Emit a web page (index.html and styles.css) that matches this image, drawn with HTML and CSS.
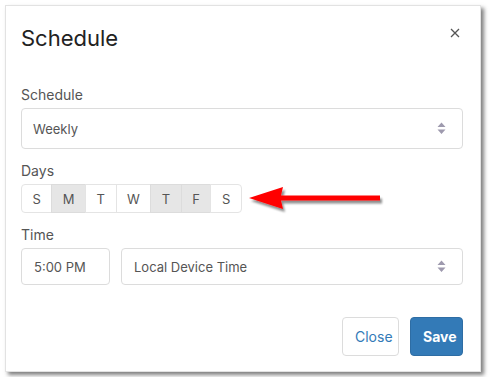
FILE: index.html
```html
<!DOCTYPE html>
<html>
<head>
<meta charset="utf-8">
<link rel="stylesheet" href="styles.css">
</head>
<body>
<div class="modal">
  <div class="modal-header">
    <h4 class="modal-title">Schedule</h4>
    <button class="close" aria-label="Close">
      <svg width="10" height="10" viewBox="0 0 10 10"><path d="M1 1L9 9M9 1L1 9" stroke="#555" stroke-width="1.3" fill="none"/></svg>
    </button>
  </div>
  <div class="modal-body">
    <div class="group">
      <label class="label">Schedule</label>
      <div class="select tall"><span>Weekly</span><span class="caret"><svg width="9" height="13" viewBox="0 0 9 13"><path d="M4.5 0.5L8.5 5H0.5Z M0.5 7.5H8.5L4.5 12Z" fill="#9e9aae"/></svg></span></div>
    </div>
    <div class="group">
      <label class="label">Days</label>
      <div class="days">
        <span class="day">S</span>
        <span class="day on">M</span>
        <span class="day">T</span>
        <span class="day">W</span>
        <span class="day on">T</span>
        <span class="day on">F</span>
        <span class="day">S</span>
      </div>
    </div>
    <div class="group">
      <label class="label">Time</label>
      <div class="time-row">
        <div class="input time">5:00 PM</div>
        <div class="select zone"><span>Local Device Time</span><span class="caret"><svg width="9" height="13" viewBox="0 0 9 13"><path d="M4.5 0.5L8.5 5H0.5Z M0.5 7.5H8.5L4.5 12Z" fill="#9e9aae"/></svg></span></div>
      </div>
    </div>
  </div>
  <div class="modal-footer">
    <button class="btn btn-default">Close</button>
    <button class="btn btn-primary">Save</button>
  </div>
</div>
<svg class="arrow" width="150" height="36" viewBox="0 0 150 36">
  <defs>
    <filter id="sh" x="-10%" y="-30%" width="130%" height="170%">
      <feGaussianBlur in="SourceAlpha" stdDeviation="1.2"/>
      <feOffset dx="2" dy="3" result="b"/>
      <feComponentTransfer><feFuncA type="linear" slope="0.45"/></feComponentTransfer>
      <feMerge><feMergeNode/><feMergeNode in="SourceGraphic"/></feMerge>
    </filter>
  </defs>
  <path filter="url(#sh)" d="M4 13 L38 2 L36 10.5 L135 10.5 L135 15.5 L36 15.5 L38 24 Z" fill="#ff0000"/>
</svg>
</body>
</html>
```
FILE: styles.css
```css
html, body {
  margin: 0;
  padding: 0;
  background: #fff;
}
body {
  padding: 5px;
  font-family: Inter, "Noto Sans", sans-serif;
  position: relative;
}
.modal {
  width: 476px;
  height: 367px;
  box-sizing: border-box;
  background: #fff;
  border: 1px solid #e2e2e2;
  box-shadow: 3px 3px 4px rgba(0,0,0,0.5);
  display: flex;
  flex-direction: column;
}
.modal-header {
  display: flex;
  justify-content: space-between;
  align-items: flex-start;
  padding: 20px 20px 0 15px;
  height: 65px;
  box-sizing: border-box;
}
.modal-title {
  margin: 0;
  font-size: 22px;
  line-height: 24px;
  font-weight: 400;
  color: #222;
}
.close {
  border: 0;
  background: none;
  padding: 0;
  margin-top: 2px;
  width: 10px;
  height: 10px;
  line-height: 0;
}
.modal-body {
  padding: 15px 17px 0 15px;
  display: flex;
  flex-direction: column;
  gap: 13px;
}
.group {
  display: flex;
  flex-direction: column;
}
.label {
  font-size: 14px;
  line-height: 17px;
  color: #555;
  margin-bottom: 5px;
}
.select, .input {
  box-sizing: border-box;
  border: 1px solid #dcdcdc;
  border-radius: 4px;
  font-size: 13px;
  color: #555;
  display: flex;
  align-items: center;
}
.select {
  justify-content: space-between;
  padding: 0 16px 0 11px;
}
.tall {
  height: 41px;
}
.caret {
  line-height: 0;
}
.days {
  display: flex;
  height: 29px;
}
.day {
  box-sizing: border-box;
  height: 29px;
  padding: 0 10.5px;
  border: 1px solid #e4e4e4;
  margin-left: -1px;
  font-size: 13px;
  color: #555;
  display: flex;
  align-items: center;
  background: #fff;
}
.day:first-child {
  margin-left: 0;
  border-radius: 4px 0 0 4px;
}
.day:last-child {
  border-radius: 0 4px 4px 0;
}
.day.on {
  background: #e6e6e6;
  border-color: #dcdcdc;
}
.time-row {
  display: flex;
  gap: 11px;
}
.time {
  width: 89px;
  height: 37px;
  padding: 0 12px;
}
.zone {
  flex: 1;
  height: 37px;
  padding-left: 12px;
}
.modal-footer {
  margin-top: auto;
  display: flex;
  justify-content: flex-end;
  gap: 11px;
  padding: 0 17px 15px 0;
}
.btn {
  height: 39px;
  box-sizing: border-box;
  border-radius: 4px;
  font-family: Inter, "Noto Sans", sans-serif;
  font-size: 14px;
  padding: 0 12px;
  cursor: pointer;
}
.btn-default {
  width: 57px;
  background: #fff;
  border: 1px solid #dcdcdc;
  color: #337ab7;
}
.btn-primary {
  width: 53px;
  background: #337ab7;
  border: 1px solid #2e6da4;
  color: #fff;
  font-weight: 700;
}
.arrow {
  position: absolute;
  left: 245px;
  top: 185px;
}
```
